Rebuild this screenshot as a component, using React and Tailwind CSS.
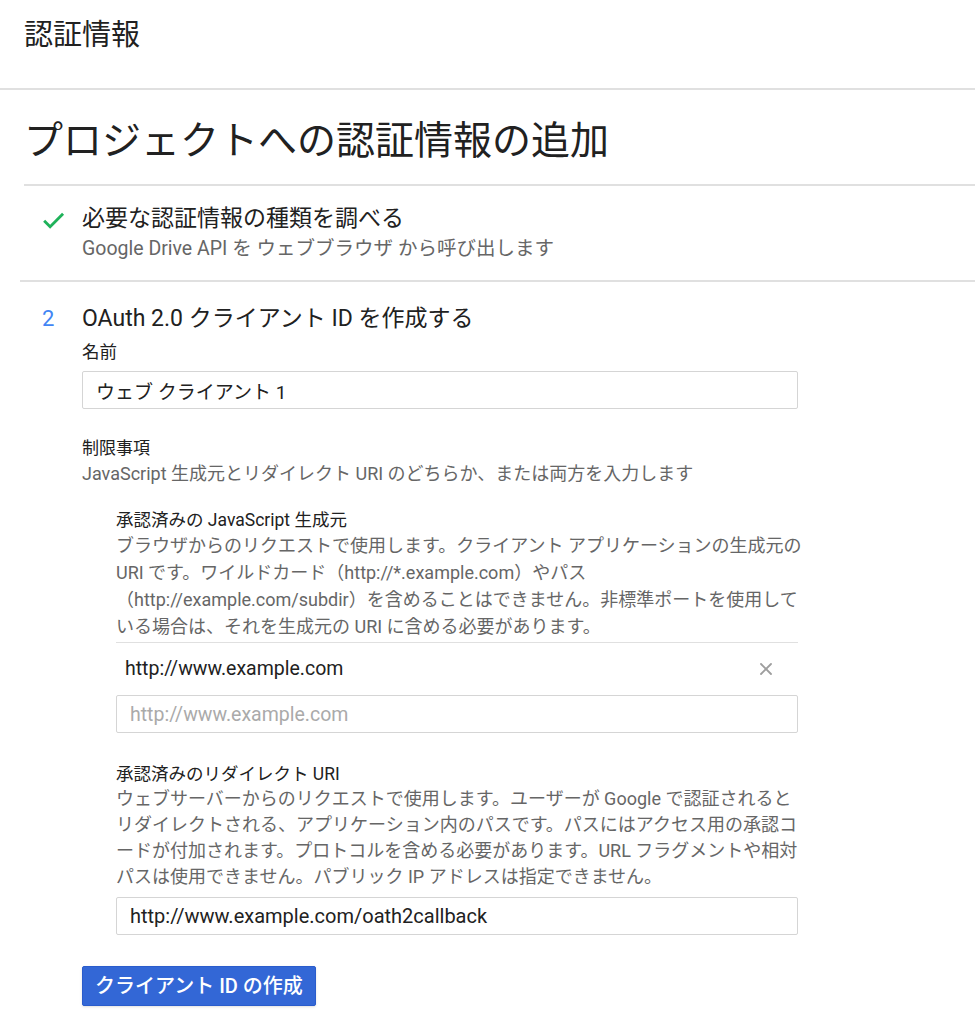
import { X } from "lucide-react";

const font = { fontFamily: 'Roboto, "Noto Sans CJK JP", sans-serif' };

export default function App() {
  return (
    <div className="min-h-[1024px] w-[975px] bg-white text-[#212121]" style={font}>
      {/* page header */}
      <div className="h-[90px] border-b-2 border-[#e0e0e0] pl-6 pt-[14px]">
        <h1 className="text-[29px] leading-[42px]">認証情報</h1>
      </div>

      <div className="pl-6">
        {/* title */}
        <div className="flex h-[96px] items-center border-b-2 border-[#e0e0e0]">
          <h2 className="text-[39px] leading-[50px] pt-2">プロジェクトへの認証情報の追加</h2>
        </div>
      </div>

      {/* step 1 */}
      <div className="ml-5 border-b-2 border-[#e0e0e0] pt-[17px] pb-[17px]">
        <div className="flex">
          <div className="w-[62px] pl-[20px] pt-[3px]">
            <svg viewBox="0 0 24 24" className="h-[27px] w-[27px] fill-[#1fb25a]">
              <path d="M9 16.6L4.6 12.2l-1.8 1.8L9 20.2 21.4 7.8 19.6 6 9 16.6z" />
            </svg>
          </div>
          <div>
            <div className="text-[23px] leading-[32px]">必要な認証情報の種類を調べる</div>
            <div className="text-[19.5px] leading-[28px] text-[#666]">
              Google Drive API を ウェブブラウザ から呼び出します
            </div>
          </div>
        </div>
      </div>

      {/* step 2 */}
      <div className="ml-5 pt-[21px]">
        <div className="flex">
          <div className="w-[62px] pl-[22px] text-[22px] leading-[32px] text-[#4285f4]">2</div>
          <div className="w-[716px]">
            <div className="text-[23px] leading-[32px]">OAuth 2.0 クライアント ID を作成する</div>

            <div className="mt-[5px] text-[17.5px] leading-[24px]">名前</div>
            <input
              className="mt-[7px] h-[38px] w-[716px] rounded-[2px] border border-[#d5d5d5] px-[13px] text-[19px] text-[#212121] outline-none"
              defaultValue="ウェブ クライアント 1"
              style={font}
            />

            <div className="mt-[26px] text-[17px] leading-[26px]">制限事項</div>
            <div className="text-[18px] leading-[26px] text-[#666] whitespace-nowrap">
              JavaScript 生成元とリダイレクト URI のどちらか、または両方を入力します
            </div>

            {/* js origins */}
            <div className="ml-[34px] mt-[21px] w-[682px]">
              <div className="text-[17.5px] leading-[24px]">承認済みの JavaScript 生成元</div>
              <div className="text-[18px] leading-[27px] text-[#666] whitespace-nowrap">
                ブラウザからのリクエストで使用します。クライアント アプリケーションの生成元の
                <br />
                URI です。ワイルドカード（http://*.example.com）やパス
                <br />
                （http://example.com/subdir）を含めることはできません。非標準ポートを使用して
                <br />
                いる場合は、それを生成元の URI に含める必要があります。
              </div>

              <div className="mt-[2px] border-t border-[#e0e0e0]">
                <div className="flex h-[52px] items-center justify-between pl-[9px] pr-[22px]">
                  <span className="text-[19.5px]">http://www.example.com</span>
                  <X className="h-[20px] w-[20px] text-[#9e9e9e]" strokeWidth={2.2} />
                </div>
                <input
                  className="h-[38px] w-[682px] rounded-[2px] border border-[#d5d5d5] px-[13px] text-[19.5px] outline-none placeholder:text-[#aaa]"
                  placeholder="http://www.example.com"
                  style={font}
                />
              </div>

              {/* redirect uris */}
              <div className="mt-[29px] text-[17.5px] leading-[24px]">承認済みのリダイレクト URI</div>
              <div className="text-[18px] leading-[26px] text-[#666] whitespace-nowrap">
                ウェブサーバーからのリクエストで使用します。ユーザーが Google で認証されると
                <br />
                リダイレクトされる、アプリケーション内のパスです。パスにはアクセス用の承認コ
                <br />
                ードが付加されます。プロトコルを含める必要があります。URL フラグメントや相対
                <br />
                パスは使用できません。パブリック IP アドレスは指定できません。
              </div>
              <input
                className="mt-[7px] h-[38px] w-[682px] rounded-[2px] border border-[#d5d5d5] px-[13px] text-[20px] text-[#212121] outline-none"
                defaultValue="http://www.example.com/oath2callback"
                style={font}
              />
            </div>

            <button className="mt-[31px] h-[40px] rounded-[2px] border border-[#2a5ccc] bg-[#3367d6] px-[12px] text-[20px] font-medium text-white shadow-sm">
              クライアント ID の作成
            </button>
          </div>
        </div>
      </div>
    </div>
  );
}
